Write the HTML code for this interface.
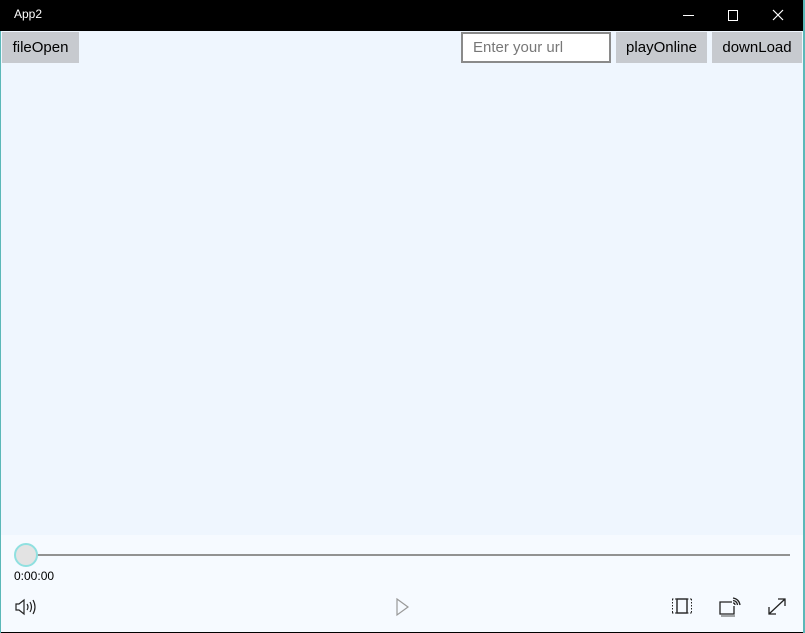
<!DOCTYPE html>
<html><head><style>
body{margin:0;width:805px;height:633px;overflow:hidden;background:#000;font-family:"Liberation Sans",sans-serif;position:relative}
.a{position:absolute}
.btn{position:absolute;top:32px;height:31px;background:#c7cacf;color:#000;font-size:15px;line-height:31px;text-align:center}
</style></head><body>
<div class="a" style="left:0;top:0;width:805px;height:31px;background:#000"></div>
<div class="a" style="left:14px;top:7px;color:#fff;font-size:12px">App2</div>
<div class="a" style="left:683px;top:15px;width:11px;height:1px;background:#fff"></div>
<div class="a" style="left:728px;top:10px;width:8px;height:9px;border:1px solid #fff"></div>
<svg class="a" style="left:772px;top:9px" width="12" height="12"><path d="M1 1L11 11M11 1L1 11" stroke="#fff" stroke-width="1.2"/></svg>
<div class="a" style="left:1px;top:31px;width:802px;height:504px;background:#eff6fe"></div>
<div class="a" style="left:1px;top:535px;width:802px;height:97px;background:#f6faff"></div>
<div class="a" style="left:803px;top:0;width:2px;height:633px;background:#5bb8b8"></div>
<div class="a" style="left:0;top:31px;width:1px;height:602px;background:#5bb8b8"></div>
<div class="btn" style="left:2px;width:77px">fileOpen</div>
<div class="a" style="left:461px;top:32px;width:146px;height:27px;border:2px solid #8a8a8a;background:#fff;color:#777;font-size:15px;line-height:27px;padding-left:10px;box-sizing:content-box;width:136px">Enter your url</div>
<div class="btn" style="left:616px;width:91px">playOnline</div>
<div class="btn" style="left:712px;width:90px">downLoad</div>
<div class="a" style="left:24px;top:554px;width:766px;height:2px;background:#929292"></div>
<div class="a" style="left:14px;top:543px;width:20px;height:20px;border-radius:50%;background:#e3e3e3;border:2px solid #8fe0e0"></div>
<div class="a" style="left:14px;top:569px;font-size:12px;color:#000">0:00:00</div>
<svg class="a" style="left:14px;top:597px" width="26" height="20" fill="none" stroke="#222" stroke-width="1.2"><path d="M2 7H5L10 3V17L5 13H2Z"/><path d="M13 7Q15 10 13 13M16 5Q19 10 16 15M19 3Q23 10 19 17"/></svg>
<svg class="a" style="left:394px;top:597px" width="16" height="20" fill="none" stroke="#999" stroke-width="1.2"><path d="M3 2L14 10L3 18Z"/></svg>
<svg class="a" style="left:671px;top:597px" width="22" height="18" fill="none" stroke="#222" stroke-width="1"><rect x="6" y="2" width="10" height="14" stroke-width="1.4"/><path d="M1.5 2V16M20.5 2V16M1 2H6M1 16H6M16 2H21M16 16H21" stroke-dasharray="1.5 1.5"/></svg>
<svg class="a" style="left:718px;top:596px" width="24" height="22" fill="none" stroke="#222" stroke-width="1.3"><path d="M14 6H2V18H16V10"/><path d="M3 20H17" stroke-width="0.8"/><path d="M15 2Q21 3 22 9M15 4.5Q19 5 19.5 9M15 7Q17 7 17 9"/></svg>
<svg class="a" style="left:766px;top:597px" width="22" height="20" fill="none" stroke="#222" stroke-width="1.3"><path d="M3 17L19 2M12 2H19V9M3 10V17H10"/></svg>
</body></html>
